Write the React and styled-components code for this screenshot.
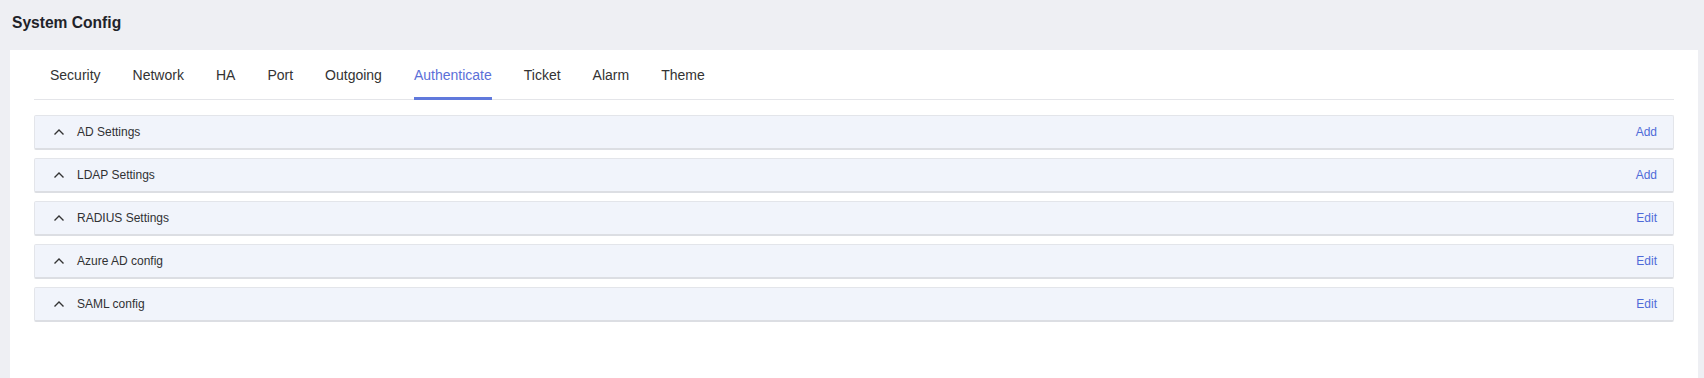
import React, { useState } from "react";
import styled, { createGlobalStyle } from "styled-components";

const GlobalStyle = createGlobalStyle`
  html, body {
    margin: 0;
    padding: 0;
    background: #eeeff3;
    font-family: "Liberation Sans", Arial, sans-serif;
    color: #333;
  }
`;

const Page = styled.div`
  min-height: 100vh;
  display: flex;
  flex-direction: column;
`;

const PageHeader = styled.header`
  height: 50px;
  box-sizing: border-box;
  padding: 13px 12px 0;
`;

const Title = styled.h1`
  margin: 0;
  font-size: 15.6px;
  line-height: 20px;
  font-weight: bold;
  color: #1f2329;
`;

const Card = styled.main`
  flex: 1;
  background: #fff;
  margin: 0 6px 0 10px;
  padding: 0 24px 24px;
`;

const TabNav = styled.nav`
  display: flex;
  padding-left: 16px;
  border-bottom: 1px solid #e4e5e9;
`;

const Tab = styled.div`
  font-size: 14px;
  line-height: 22px;
  padding: 14px 0 11px;
  margin: 0 32px -1px 0;
  color: ${(p) => (p.active ? "#5b6fd8" : "#333")};
  border-bottom: 3px solid ${(p) => (p.active ? "#6079dc" : "transparent")};
  cursor: pointer;
`;

const PanelList = styled.div`
  display: flex;
  flex-direction: column;
  gap: 8px;
  margin-top: 15px;
`;

const Panel = styled.section`
  background: #f1f4fb;
  border: 1px solid #e3e5ea;
  border-bottom: 2px solid #dcdee3;
  border-radius: 2px;
`;

const PanelHeader = styled.div`
  display: flex;
  align-items: center;
  height: 32px;
  padding: 0 16px 0 18px;
`;

const Chevron = styled.svg`
  width: 12px;
  height: 12px;
  margin-right: 12px;
  flex-shrink: 0;
`;

const PanelTitle = styled.span`
  flex: 1;
  font-size: 12px;
  color: #303133;
`;

const ActionLink = styled.a`
  font-size: 12px;
  color: #4f6bd8;
  cursor: pointer;
`;

const tabs = [
  "Security",
  "Network",
  "HA",
  "Port",
  "Outgoing",
  "Authenticate",
  "Ticket",
  "Alarm",
  "Theme",
];

const panels = [
  { title: "AD Settings", action: "Add" },
  { title: "LDAP Settings", action: "Add" },
  { title: "RADIUS Settings", action: "Edit" },
  { title: "Azure AD config", action: "Edit" },
  { title: "SAML config", action: "Edit" },
];

export default function App() {
  const [active, setActive] = useState("Authenticate");

  return (
    <Page>
      <GlobalStyle />
      <PageHeader>
        <Title>System Config</Title>
      </PageHeader>
      <Card>
        <TabNav>
          {tabs.map((t) => (
            <Tab key={t} active={t === active} onClick={() => setActive(t)}>
              {t}
            </Tab>
          ))}
        </TabNav>

        <PanelList>
          {panels.map((p) => (
            <Panel key={p.title}>
              <PanelHeader>
                <Chevron viewBox="0 0 12 12">
                  <polyline
                    points="1.5,8.5 6,4 10.5,8.5"
                    fill="none"
                    stroke="#333"
                    strokeWidth="1.4"
                  />
                </Chevron>
                <PanelTitle>{p.title}</PanelTitle>
                <ActionLink>{p.action}</ActionLink>
              </PanelHeader>
            </Panel>
          ))}
        </PanelList>
      </Card>
    </Page>
  );
}
